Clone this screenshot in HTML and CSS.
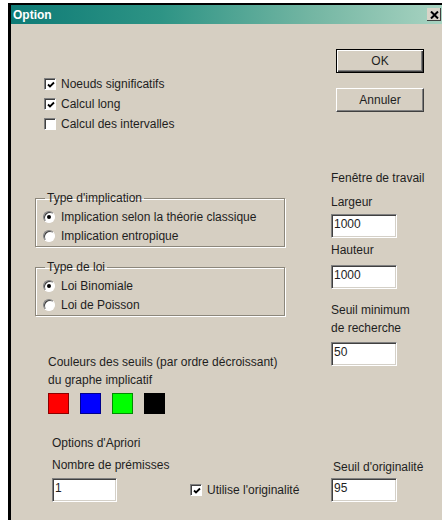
FILE: index.html
```html
<!DOCTYPE html>
<html lang="fr">
<head>
<meta charset="utf-8">
<title>Option</title>
<link rel="stylesheet" href="styles.css">
</head>
<body>
<div class="dialog">
  <div class="titlebar">
    <span class="title">Option</span>
    <span class="close">
      <svg width="9" height="8" viewBox="0 0 9 8"><path d="M1 0.5 L8 7.5 M8 0.5 L1 7.5" stroke="#000" stroke-width="2"/></svg>
    </span>
  </div>

  <div class="content">
    <div class="col-left">
      <div class="checks">
        <div class="row"><span class="check on"><svg width="8" height="8" viewBox="0 0 8 8"><path d="M1 3.5 L3 5.5 L7 1.5" fill="none" stroke="#000" stroke-width="1.8"/></svg></span>Noeuds significatifs</div>
        <div class="row"><span class="check on"><svg width="8" height="8" viewBox="0 0 8 8"><path d="M1 3.5 L3 5.5 L7 1.5" fill="none" stroke="#000" stroke-width="1.8"/></svg></span>Calcul long</div>
        <div class="row"><span class="check"></span>Calcul des intervalles</div>
      </div>

      <fieldset class="group group-impl">
        <legend>Type d'implication</legend>
        <div class="row"><span class="radio on"></span>Implication selon la théorie classique</div>
        <div class="row"><span class="radio"></span>Implication entropique</div>
      </fieldset>

      <fieldset class="group group-loi">
        <legend>Type de loi</legend>
        <div class="row"><span class="radio on"></span>Loi Binomiale</div>
        <div class="row"><span class="radio"></span>Loi de Poisson</div>
      </fieldset>

      <div class="colors">
        <div class="line">Couleurs des seuils (par ordre décroissant)</div>
        <div class="line">du graphe implicatif</div>
        <div class="swatches">
          <span class="swatch red"></span>
          <span class="swatch blue"></span>
          <span class="swatch green"></span>
          <span class="swatch black"></span>
        </div>
      </div>

      <div class="apriori">
        <div class="aline">Options d'Apriori</div>
        <div class="aline">Nombre de prémisses</div>
        <div class="apriori-row">
          <div class="field short">1</div>
          <div class="row orig"><span class="check on"><svg width="8" height="8" viewBox="0 0 8 8"><path d="M1 3.5 L3 5.5 L7 1.5" fill="none" stroke="#000" stroke-width="1.8"/></svg></span>Utilise l'originalité</div>
        </div>
      </div>
    </div>

    <div class="col-right">
      <div class="btn default">OK</div>
      <div class="btn cancel">Annuler</div>

      <div class="label tall first">Fenêtre de travail</div>
      <div class="label tall">Largeur</div>
      <div class="field">1000</div>
      <div class="label tall">Hauteur</div>
      <div class="field f-h">1000</div>
      <div class="seuil">
        <div class="label">Seuil minimum</div>
        <div class="label">de recherche</div>
      </div>
      <div class="field f-s">50</div>

      <div class="label orig-label">Seuil d'originalité</div>
      <div class="field f-o">95</div>
    </div>
  </div>
</div>
</body>
</html>
```

FILE: styles.css
```css
html, body {
  margin: 0;
  padding: 0;
  background: #fff;
  overflow: hidden;
}

body {
  font-family: "Liberation Sans", Arial, sans-serif;
  font-size: 12px;
  color: #1e1e1e;
}

.dialog {
  margin: 3px 0 0 8px;
  height: 517px;
  border-left: 3px solid #000;
  border-top: 2px solid #000;
  background: #d6cfc2;
}

/* caption bar */
.titlebar {
  height: 19px;
  display: flex;
  align-items: center;
  justify-content: space-between;
  background: linear-gradient(to right, #0e7b76 0%, #2e9485 35%, #74b6a3 70%, #a8d3c1 100%);
}

.title {
  color: #fff;
  font-weight: bold;
  font-size: 12px;
  padding-left: 2px;
}

.close {
  width: 14px;
  height: 13px;
  margin-right: 1px;
  display: flex;
  align-items: center;
  justify-content: center;
  background: #d9d4c8;
  box-shadow: inset -1px -1px 0 #404040;
}

.content {
  display: grid;
  grid-template-columns: 320px 1fr;
}

/* shared row with a box + label */
.row {
  display: flex;
  align-items: center;
  height: 20px;
}

.check {
  box-sizing: border-box;
  width: 12px;
  height: 12px;
  margin-right: 5px;
  background: #fff;
  border: 1px solid;
  border-color: #808080 #fff #fff #808080;
  box-shadow: inset 1px 1px 0 #404040;
  display: flex;
  align-items: center;
  justify-content: center;
}

.check svg {
  margin: 1px 0 0 1px;
}

.radio {
  box-sizing: border-box;
  width: 12px;
  height: 12px;
  margin-right: 6px;
  border-radius: 50%;
  background: #fff;
  border: 1px solid;
  border-color: #808080 #fff #fff #808080;
  box-shadow: inset 1px 1px 0 #404040;
  display: flex;
  align-items: center;
  justify-content: center;
}

.radio.on::after {
  content: "";
  width: 4px;
  height: 4px;
  border-radius: 50%;
  background: #000;
}

/* left column */
.checks {
  margin-top: 50px;
  padding-left: 33px;
}

.group {
  margin: 0 0 0 24px;
  width: 250px;
  box-sizing: border-box;
  padding: 0 0 1px 7px;
  border: 1px solid #8c877b;
  box-shadow: inset 1px 1px 0 #fff, 1px 1px 0 #fff;
  min-width: 0;
}

.group legend {
  padding: 0 2px;
  margin-left: 2px;
  line-height: 14px;
}

.group .row {
  height: 19px;
}

.group-impl {
  margin-top: 57px;
}

.group-impl .row:first-of-type,
.group-loi .row:first-of-type {
  margin-top: 2px;
}

.group-loi {
  margin-top: 13px;
}

.colors {
  margin-top: 37px;
  padding-left: 37px;
}

.line {
  line-height: 18px;
}

.swatches {
  display: flex;
  gap: 11px;
  margin-top: 4px;
}

.swatch {
  width: 21px;
  height: 21px;
  box-sizing: border-box;
  border: 1px solid rgba(0, 0, 0, 0.45);
}

.red { background: #ff0000; }
.blue { background: #0000ff; }
.green { background: #00ff00; }
.black { background: #000; }

.apriori {
  margin-top: 18px;
  padding-left: 41px;
}

.aline {
  line-height: 22px;
}

.apriori-row {
  display: flex;
  align-items: center;
  margin-top: 2px;
}

.orig {
  margin-left: 73px;
}

/* sunken edit box */
.field {
  box-sizing: border-box;
  width: 66px;
  height: 24px;
  background: #fff;
  border: 1px solid;
  border-color: #808080 #fff #fff #808080;
  box-shadow: inset 1px 1px 0 #404040, inset -1px -1px 0 #d4d0c8;
  padding: 2px 0 0 2px;
  line-height: 14px;
}

.field.short {
  width: 65px;
}

/* right column */
.btn {
  box-sizing: border-box;
  width: 88px;
  height: 24px;
  margin-left: 5px;
  display: flex;
  align-items: center;
  justify-content: center;
  border: 1px solid;
  border-color: #fff #404040 #404040 #fff;
  box-shadow: inset -1px -1px 0 #808080;
}

.btn.default {
  margin-top: 25px;
  border: 1px solid #000;
  box-shadow: inset 1px 1px 0 #fff, inset -1px -1px 0 #404040, inset -2px -2px 0 #808080;
}

.btn.cancel {
  margin-top: 15px;
}

.label {
  line-height: 18px;
}

.label.tall {
  line-height: 24px;
}

.label.first {
  margin-top: 54px;
}

.f-h {
  margin-top: 3px;
}

.seuil {
  margin-top: 12px;
}

.f-s {
  margin-top: 5px;
}

.orig-label {
  margin-top: 92px;
  padding-left: 2px;
}

.f-o {
  margin-top: 2px;
}
```
